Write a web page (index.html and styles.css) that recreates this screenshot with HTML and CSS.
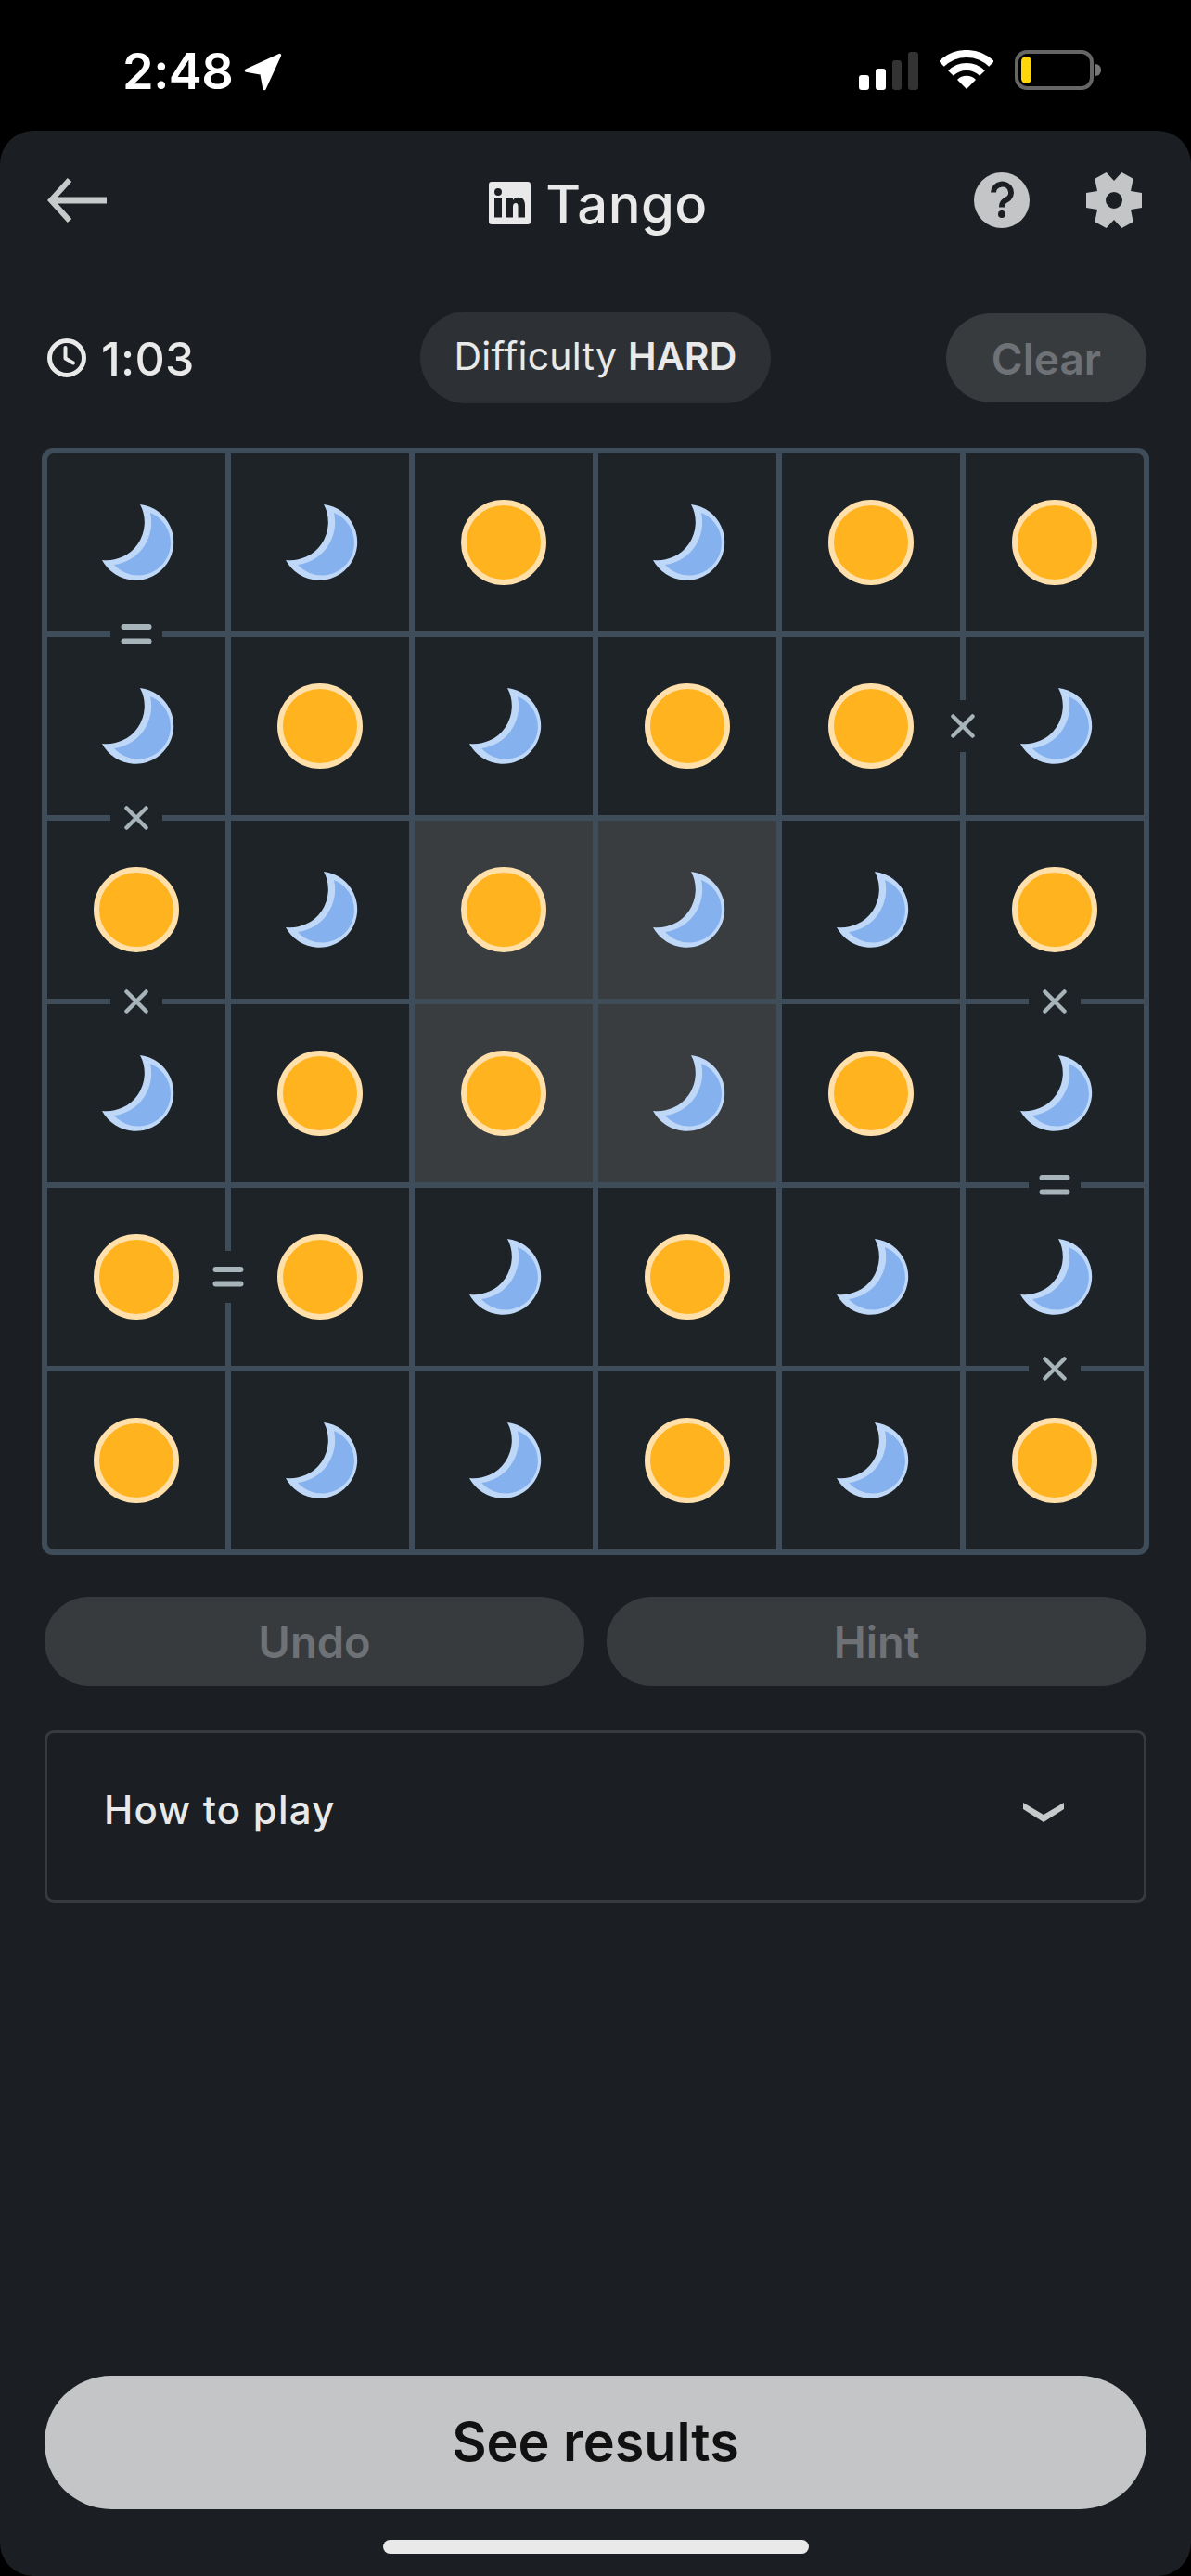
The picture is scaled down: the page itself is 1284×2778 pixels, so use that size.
FILE: index.html
```html
<!DOCTYPE html>
<html lang="en">
<head>
<meta charset="utf-8">
<title>Tango</title>
<link rel="stylesheet" href="styles.css">
</head>
<body>
<svg class="defs" width="0" height="0" aria-hidden="true">
  <symbol id="sun" viewBox="0 0 92 92">
    <circle cx="46" cy="46" r="43" fill="#ffb31f" stroke="#ffe0aa" stroke-width="6"/>
  </symbol>
  <symbol id="moon" viewBox="-46 -46 92 92">
    <path d="M4 -41A41 41 0 1 1 -37 19A41 41 0 0 0 4 -41Z" fill="#c0d8f8"/>
    <path d="M15 -32A35 35 0 1 1 -24 24A46 46 0 0 0 15 -32Z" fill="#85b1ee"/>
  </symbol>
  <symbol id="eq" viewBox="0 0 34 22">
    <rect x="0.5" y="0" width="33" height="6" rx="3" fill="#a7b4ba"/>
    <rect x="0.5" y="15.500" width="33" height="6" rx="3" fill="#a7b4ba"/>
  </symbol>
  <symbol id="cross" viewBox="0 0 26 26">
    <path d="M2.500 2.500L23.500 23.500M23.500 2.500L2.500 23.500" stroke="#a7b4ba" stroke-width="4.500" stroke-linecap="round" fill="none"/>
  </symbol>
</svg>

<div class="status">
  <div class="status-left">
    <span class="time">2:48</span>
    <svg class="loc" viewBox="0 0 42 41"><path d="M39.500 2.500L3.500 19L20 22L23 38.500Z" fill="#fff" stroke="#fff" stroke-width="3.500" stroke-linejoin="round"/></svg>
  </div>
  <div class="status-right">
    <div class="signal">
      <i class="bar bar1"></i><i class="bar bar2"></i><i class="bar bar3"></i><i class="bar bar4"></i>
    </div>
    <svg class="wifi" viewBox="0 0 58 42">
      <path d="M29 42L19 32A14 14 0 0 1 39 32Z" fill="#fff"/>
      <path d="M12 25A24 24 0 0 1 46 25" fill="none" stroke="#fff" stroke-width="8"/>
      <path d="M2 15A38.500 38.500 0 0 1 56 15" fill="none" stroke="#fff" stroke-width="8"/>
    </svg>
    <div class="battery"><div class="battery-body"><i class="battery-fill"></i></div><i class="battery-nub"></i></div>
  </div>
</div>

<main class="sheet">
  <header class="topbar">
    <svg class="back" viewBox="0 0 64 48"><path d="M24 2L4 24L24 46" fill="none" stroke="#c8c9ca" stroke-width="6"/><path d="M5 24H64" stroke="#c8c9ca" stroke-width="7"/></svg>
    <div class="title">
      <svg class="logo" viewBox="0 0 45 46"><path fill-rule="evenodd" fill="#e9e9e9" d="M3 0H42A3 3 0 0 1 45 3V43A3 3 0 0 1 42 46H3A3 3 0 0 1 0 43V3A3 3 0 0 1 3 0ZM10 7A4 4 0 1 0 10 15A4 4 0 1 0 10 7ZM6 17.500V38.500H14V17.500ZM18 17.500V38.500H26V27C26 24.500 27 23 29 23C31 23 31.500 24.500 31.500 27V38.500H39V25.500C39 20 36.500 16.800 32 16.800C29.500 16.800 27.300 18 26 20V17.500Z"/></svg>
      <span class="title-text">Tango</span>
    </div>
    <div class="top-actions">
      <svg class="top-icon" viewBox="0 0 60 60"><circle cx="30" cy="30" r="30" fill="#c4c5c7"/><path d="M21 21.500A9.500 9 0 1 1 35 29.500C32 31.500 30 32.500 30 37.500" fill="none" stroke="#1b1f23" stroke-width="6"/><circle cx="30" cy="45" r="4" fill="#1b1f23"/></svg>
      <svg class="top-icon" viewBox="0 0 60 60"><path fill-rule="evenodd" fill="#c4c5c7" d="M30 9L21.700 0L9.300 6.700L12 20L0 22V38L12 40L9.300 53.300L21.700 60L30 51L38.300 60L50.700 53.300L48 40L60 38V22L48 20L50.700 6.700L38.300 0ZM30 21A9 9 0 1 1 30 39A9 9 0 1 1 30 21Z"/></svg>
    </div>
  </header>

  <section class="meta">
    <div class="timer">
      <svg class="clock" viewBox="0 0 42 42"><circle cx="21" cy="21" r="18.500" fill="none" stroke="#e9e9e9" stroke-width="5"/><path d="M19.500 10V21.500L28 26.500" fill="none" stroke="#e9e9e9" stroke-width="4" stroke-linecap="round" stroke-linejoin="round"/></svg>
      <span class="timer-text">1:03</span>
    </div>
    <div class="difficulty">Difficulty <b>HARD</b></div>
    <div class="clear">Clear</div>
  </section>

  <section class="board">
    <div class="cell tl"><svg class="piece"><use href="#moon"/></svg></div>
    <div class="cell"><svg class="piece"><use href="#moon"/></svg></div>
    <div class="cell"><svg class="piece"><use href="#sun"/></svg></div>
    <div class="cell"><svg class="piece"><use href="#moon"/></svg></div>
    <div class="cell"><svg class="piece"><use href="#sun"/></svg></div>
    <div class="cell tr"><svg class="piece"><use href="#sun"/></svg></div>

    <div class="cell"><svg class="piece"><use href="#moon"/></svg><div class="mark-top"><svg class="eq"><use href="#eq"/></svg></div></div>
    <div class="cell"><svg class="piece"><use href="#sun"/></svg></div>
    <div class="cell"><svg class="piece"><use href="#moon"/></svg></div>
    <div class="cell"><svg class="piece"><use href="#sun"/></svg></div>
    <div class="cell"><svg class="piece"><use href="#sun"/></svg><div class="mark-right"><svg class="cross"><use href="#cross"/></svg></div></div>
    <div class="cell"><svg class="piece"><use href="#moon"/></svg></div>

    <div class="cell"><svg class="piece"><use href="#sun"/></svg><div class="mark-top"><svg class="cross"><use href="#cross"/></svg></div></div>
    <div class="cell"><svg class="piece"><use href="#moon"/></svg></div>
    <div class="cell hi"><svg class="piece"><use href="#sun"/></svg></div>
    <div class="cell hi"><svg class="piece"><use href="#moon"/></svg></div>
    <div class="cell"><svg class="piece"><use href="#moon"/></svg></div>
    <div class="cell"><svg class="piece"><use href="#sun"/></svg></div>

    <div class="cell"><svg class="piece"><use href="#moon"/></svg><div class="mark-top"><svg class="cross"><use href="#cross"/></svg></div></div>
    <div class="cell"><svg class="piece"><use href="#sun"/></svg></div>
    <div class="cell hi"><svg class="piece"><use href="#sun"/></svg></div>
    <div class="cell hi"><svg class="piece"><use href="#moon"/></svg></div>
    <div class="cell"><svg class="piece"><use href="#sun"/></svg></div>
    <div class="cell"><svg class="piece"><use href="#moon"/></svg><div class="mark-top"><svg class="cross"><use href="#cross"/></svg></div></div>

    <div class="cell"><svg class="piece"><use href="#sun"/></svg><div class="mark-right"><svg class="eq"><use href="#eq"/></svg></div></div>
    <div class="cell"><svg class="piece"><use href="#sun"/></svg></div>
    <div class="cell"><svg class="piece"><use href="#moon"/></svg></div>
    <div class="cell"><svg class="piece"><use href="#sun"/></svg></div>
    <div class="cell"><svg class="piece"><use href="#moon"/></svg></div>
    <div class="cell"><svg class="piece"><use href="#moon"/></svg><div class="mark-top"><svg class="eq"><use href="#eq"/></svg></div></div>

    <div class="cell bl"><svg class="piece"><use href="#sun"/></svg></div>
    <div class="cell"><svg class="piece"><use href="#moon"/></svg></div>
    <div class="cell"><svg class="piece"><use href="#moon"/></svg></div>
    <div class="cell"><svg class="piece"><use href="#sun"/></svg></div>
    <div class="cell"><svg class="piece"><use href="#moon"/></svg></div>
    <div class="cell br"><svg class="piece"><use href="#sun"/></svg><div class="mark-top"><svg class="cross"><use href="#cross"/></svg></div></div>
  </section>

  <section class="actions">
    <div class="action">Undo</div>
    <div class="action">Hint</div>
  </section>

  <section class="howto">
    <span class="howto-label">How to play</span>
    <svg class="chevron" viewBox="0 0 44 21"><path d="M0 0L22 13L44 0V7L22 21L0 7Z" fill="#c8c9ca"/></svg>
  </section>

  <div class="spacer"></div>

  <div class="results">See results</div>
  <div class="home"></div>
</main>
</body>
</html>
```
FILE: styles.css
```css
* { box-sizing: border-box; }
html, body { margin: 0; padding: 0; }
body {
  width: 1284px;
  height: 2778px;
  background: #000;
  font-family: Inter, "Liberation Sans", sans-serif;
  overflow: hidden;
}
.defs { position: absolute; }
svg { display: block; flex: none; }

/* status bar */
.status {
  height: 141px;
  display: flex;
  justify-content: space-between;
  padding: 54px 97px 0 132px;
}
.status-left { display: flex; align-items: flex-start; gap: 11px; }
.time {
  color: #fff;
  font-size: 54px;
  font-weight: 600;
  line-height: 46px;
  letter-spacing: -0.5px;
}
.loc { width: 42px; height: 41px; margin-top: 3px; }
.status-right { display: flex; align-items: flex-start; }
.signal { display: flex; align-items: flex-end; gap: 7px; height: 42px; width: 64px; margin-top: 1px; }
.bar { width: 11px; border-radius: 3px; background: #fff; }
.bar1 { height: 16px; }
.bar2 { height: 23px; }
.bar3 { height: 32px; background: #333; }
.bar4 { height: 41px; background: #333; }
.wifi { width: 58px; height: 42px; margin-left: 23px; }
.battery { display: flex; align-items: center; margin-left: 23px; }
.battery-body {
  width: 85px;
  height: 43px;
  border: 4px solid #666;
  border-radius: 13px;
  padding: 3px;
}
.battery-fill { display: block; width: 11px; height: 29px; border-radius: 5px; background: #ffd60a; }
.battery-nub { width: 6px; height: 13px; margin-left: 2px; background: #777; border-radius: 0 6px 6px 0; }

/* sheet */
.sheet {
  height: 2637px;
  background: #1b1f23;
  border-radius: 36px;
  padding: 45px 45px 0;
  display: flex;
  flex-direction: column;
}
.topbar {
  height: 60px;
  display: grid;
  grid-template-columns: 1fr auto 1fr;
  align-items: center;
}
.back { width: 64px; height: 48px; margin-left: 6px; }
.title {
  display: flex;
  align-items: center;
  gap: 16px;
  padding-left: 6px;
  color: #e9e9e9;
  font-size: 58px;
  font-weight: 500;
  letter-spacing: 0.4px;
}
.title-text { line-height: 46px; padding-top: 7px; }
.logo { width: 45px; height: 46px; margin-top: 6px; }
.top-actions { display: flex; justify-content: flex-end; gap: 61px; padding-right: 8px; }
.top-icon { width: 60px; height: 60px; }

.meta {
  margin: 90px 3px 0;
  height: 99px;
  display: grid;
  grid-template-columns: 1fr auto 1fr;
  align-items: center;
}
.timer {
  display: flex;
  align-items: center;
  gap: 16px;
  padding-left: 3px;
  color: #e9e9e9;
  font-size: 50px;
  font-weight: 500;
}
.timer-text { padding-top: 2px; letter-spacing: 0.3px; }
.clock { width: 42px; height: 42px; }
.difficulty {
  height: 99px;
  padding: 0 37px;
  border-radius: 50px;
  background: #2d3135;
  color: #e9e9e9;
  font-size: 41px;
  letter-spacing: 0.2px;
  line-height: 96px;
  white-space: pre;
}
.difficulty b { font-weight: 600; }
.clear {
  justify-self: end;
  width: 216px;
  height: 96px;
  border-radius: 48px;
  background: #383b3e;
  color: #6e7276;
  font-size: 46px;
  font-weight: 600;
  line-height: 98px;
  text-align: center;
}

/* board */
.board {
  margin-top: 48px;
  width: 1194px;
  display: grid;
  grid-template-columns: repeat(6, 192px);
  grid-auto-rows: 192px;
  gap: 6px;
  padding: 6px;
  background: #3f4d5b;
  border-radius: 12px;
}
.cell {
  position: relative;
  display: flex;
  align-items: center;
  justify-content: center;
  background: #1e2327;
}
.cell.hi { background: #393d40; }
.cell.tl { border-top-left-radius: 7px; }
.cell.tr { border-top-right-radius: 7px; }
.cell.bl { border-bottom-left-radius: 7px; }
.cell.br { border-bottom-right-radius: 7px; }
.piece { width: 92px; height: 92px; }

.mark-top,
.mark-right {
  position: absolute;
  z-index: 1;
  display: flex;
  align-items: center;
  justify-content: center;
  background: #1e2327;
}
.mark-top { left: 68px; top: -6px; width: 56px; height: 6px; }
.mark-right { right: -6px; top: 68px; width: 6px; height: 56px; }
.eq { width: 34px; height: 22px; }
.cross { width: 26px; height: 26px; }

/* actions */
.actions {
  margin: 45px 3px 0;
  display: grid;
  grid-template-columns: 582px 582px;
  gap: 24px;
}
.action {
  height: 96px;
  border-radius: 48px;
  background: #383b3e;
  color: #6e7276;
  font-size: 47px;
  font-weight: 600;
  line-height: 98px;
  text-align: center;
}
.howto {
  margin: 48px 3px 0;
  height: 186px;
  border: 3px solid #383b3e;
  border-radius: 10px;
  padding: 58px 86px 0 61px;
  display: flex;
  justify-content: space-between;
  align-items: flex-start;
}
.howto-label {
  color: #e9e9e9;
  font-size: 42px;
  font-weight: 500;
  line-height: 50px;
  letter-spacing: 1.2px;
}
.chevron { width: 44px; height: 21px; margin-top: 17px; }

.spacer { flex: 1; }

.results {
  margin: 0 3px;
  height: 144px;
  border-radius: 72px;
  background: #c4c5c7;
  color: #111;
  font-size: 57.500px;
  font-weight: 600;
  line-height: 143px;
  text-align: center;
}
.home {
  align-self: center;
  width: 459px;
  height: 15px;
  margin: 33px 0 24px;
  border-radius: 8px;
  background: #e9e9e9;
}
```
